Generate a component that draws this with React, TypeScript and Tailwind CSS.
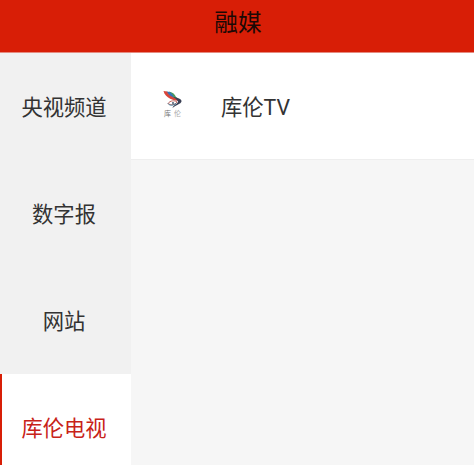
const channels = ['央视频道', '数字报', '网站', '库伦电视'];
const active = 3;

function KulunLogo() {
  return (
    <div className="mb-[5px] w-5 shrink-0">
      <svg viewBox="0 0 20 18" className="block h-[18px] w-5">
        <path d="M6 .5 C9 1 12 3 13 6 L16 8 L11 7 C9 5 7 3 6 .5Z" fill="#4a9a5c" />
        <path d="M3.5 .5 C7 0 10 3 11 7 L8 6 C6 5 4 3 3.5 .5Z" fill="#3275b8" />
        <path d="M.5 0 L4 .5 C5 4 8 5.5 12 7 L18 10 C11 10 2 7 .5 0Z" fill="#d8453a" />
        <path d="M10 6 C14 6.5 19 8 18.5 10.5 C18 13 13 14 9.5 17 C10 14 15 12.5 15 10.5 C14 8.5 12 7.5 10 6Z" fill="#3b4055" />
        <path d="M5 12.5 C7 9.5 12 9 14 11 C12 14 8 14.5 5 12.5Z" fill="none" stroke="#c06a64" strokeWidth="1" />
        <path d="M5 12.5 C7 15 10 14.5 13 12.5" fill="none" stroke="#397d9c" strokeWidth="1" />
        <circle cx="10" cy="12" r="1" fill="#485c72" />
      </svg>
      <div className="flex justify-between pr-[2px] pl-px text-[7px] leading-[8px]">
        <span className="text-[#777]">库</span>
        <span className="text-[#aaa]">伦</span>
      </div>
    </div>
  );
}

export default function App() {
  return (
    <div className="flex h-[465px] w-[474px] flex-col overflow-hidden bg-[#f6f6f6] font-['Noto_Sans_CJK_SC',sans-serif] text-[#333]">
      {/* Header */}
      <header className="flex h-[53px] shrink-0 justify-center border-b border-[#e58b80] bg-[#d81e06] pt-[5px] pl-[2px]">
        <h1 className="text-[23.7px] leading-[32px] text-[#1c0905]">融媒</h1>
      </header>

      <div className="flex min-h-0 flex-1">
        {/* Sidebar */}
        <nav className="w-[131px] shrink-0 bg-[#f1f1f1]">
          {channels.map((name, i) => (
            <button
              key={name}
              className={`flex h-[107px] w-full items-center justify-center border-l-2 pr-[5px] pb-[2px] text-[21.3px] ${
                i === active ? 'border-[#d81e06] bg-white text-[#c82218]' : 'border-transparent'
              }`}
            >
              {name}
            </button>
          ))}
        </nav>

        {/* Channel list */}
        <main className="flex-1">
          <div className="flex h-[107px] items-center border-b border-[#eee] bg-white pl-8">
            <KulunLogo />
            <span className="ml-[38px] pt-[3px] font-[Roboto,'Noto_Sans_CJK_SC',sans-serif] text-[21.3px] text-[#333]">
              库伦TV
            </span>
          </div>
        </main>
      </div>
    </div>
  );
}
